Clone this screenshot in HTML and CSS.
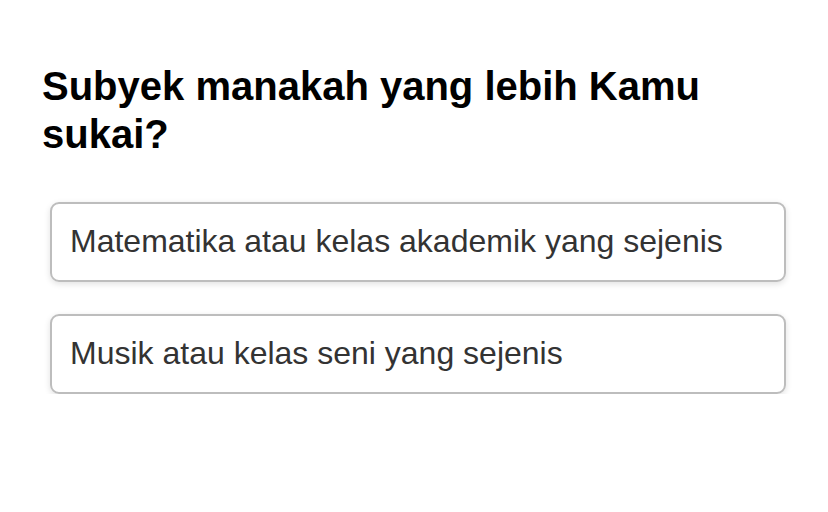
FILE: index.html
```html
<!DOCTYPE html>
<html>
<head>
<meta charset="utf-8">
<link rel="stylesheet" href="styles.css">
</head>
<body>
<main class="quiz">
  <h1 class="question">Subyek manakah yang lebih Kamu sukai?</h1>
  <div class="options">
    <div class="option">Matematika atau kelas akademik yang sejenis</div>
    <div class="option">Musik atau kelas seni yang sejenis</div>
  </div>
</main>
</body>
</html>
```

FILE: styles.css
```css
html, body {
  margin: 0;
  padding: 0;
  background: #fff;
}
body {
  font-family: "Liberation Sans", Arial, sans-serif;
}
.quiz {
  padding: 62px 42px 0 42px;
}
.question {
  margin: 0;
  font-size: 40px;
  line-height: 48px;
  font-weight: bold;
  color: #000;
  width: 700px;
}
.options {
  display: flex;
  flex-direction: column;
  gap: 32px;
  margin: 44px 0 0 8px;
  width: 736px;
}
.option {
  height: 80px;
  box-sizing: border-box;
  border: 2px solid #bdbdbd;
  border-radius: 9px;
  box-shadow: 0 2px 6px rgba(0,0,0,0.12);
  padding: 0 0 2px 18px;
  display: flex;
  align-items: center;
  font-size: 32px;
  color: #333;
}
```
